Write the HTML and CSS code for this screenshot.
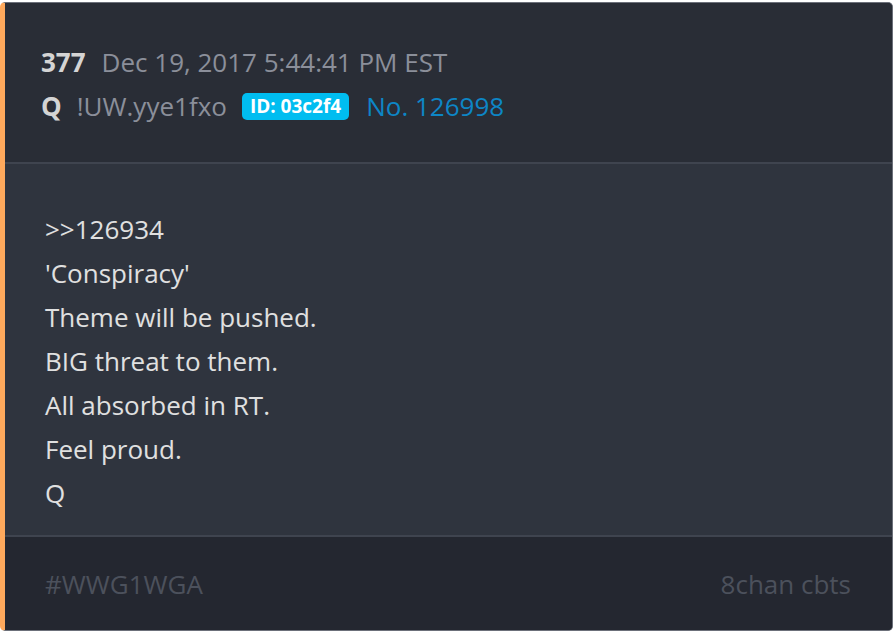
FILE: index.html
```html
<!DOCTYPE html>
<html lang="en">
<head>
    <meta charset="UTF-8">
    <title>Post 377</title>
    <link rel="stylesheet" href="styles.css">
</head>
<body>
    <div class="post">
        <div class="post-header">
            <div class="meta-line">
                <span class="post-num">377</span>
                <span class="post-date">Dec 19, 2017 5:44:41 PM EST</span>
            </div>
            <div class="meta-line">
                <span class="author">Q</span>
                <span class="trip">!UW.yye1fxo</span>
                <span class="user-id">ID: 03c2f4</span>
                <span class="post-no">No. 126998</span>
            </div>
        </div>

        <div class="post-body">
            <p>&gt;&gt;126934</p>
            <p>'Conspiracy'</p>
            <p>Theme will be pushed.</p>
            <p>BIG threat to them.</p>
            <p>All absorbed in RT.</p>
            <p>Feel proud.</p>
            <p>Q</p>
        </div>

        <div class="post-footer">
            <span class="tag">#WWG1WGA</span>
            <span class="source">8chan cbts</span>
        </div>
    </div>
</body>
</html>
```

FILE: styles.css
```css
/* General Styles */
html, body {
    margin: 0;
    padding: 0;
    background: #fff;
}

body {
    font-family: "Open Sans", "Liberation Sans", sans-serif;
    padding: 2px 1px 1px 0;
}

.post {
    height: 629px;
    box-sizing: border-box;
    display: flex;
    flex-direction: column;
    border: 1px solid #6c707a;
    border-left: 5px solid #ffa95c;
    border-radius: 5px;
    overflow: hidden;
    background: #2f343e;
}

.post-header {
    background: #292d36;
    padding: 37px 36px 34px;
    border-bottom: 2px solid #3f444f;
}

.meta-line {
    display: flex;
    align-items: center;
    height: 44px;
    font-size: 26px;
}

.post-num {
    font-weight: bold;
    color: #d4d4d4;
    margin-right: 16px;
}

.post-date {
    color: #8b8f9a;
}

.author {
    font-weight: bold;
    color: #d4d4d4;
    margin-right: 15px;
}

.trip {
    color: #8b8f9a;
    margin-right: 15px;
}

.user-id {
    background: #00bdf0;
    color: #fff;
    font-weight: bold;
    font-size: 19px;
    line-height: 27px;
    padding: 0 8px;
    border-radius: 5px;
    margin-right: 17px;
}

.post-no {
    color: #0d86c6;
}

.post-body {
    flex: 1;
    padding: 43px 40px 19px;
    border-bottom: 2px solid #3f444f;
}

.post-body p {
    margin: 0;
    font-size: 26px;
    line-height: 44px;
    color: #e0e0e0;
}

.post-footer {
    height: 93px;
    background: #242730;
    display: flex;
    align-items: center;
    justify-content: space-between;
    padding: 0 41px 0 40px;
    font-size: 26px;
    color: #4c515c;
}
```
